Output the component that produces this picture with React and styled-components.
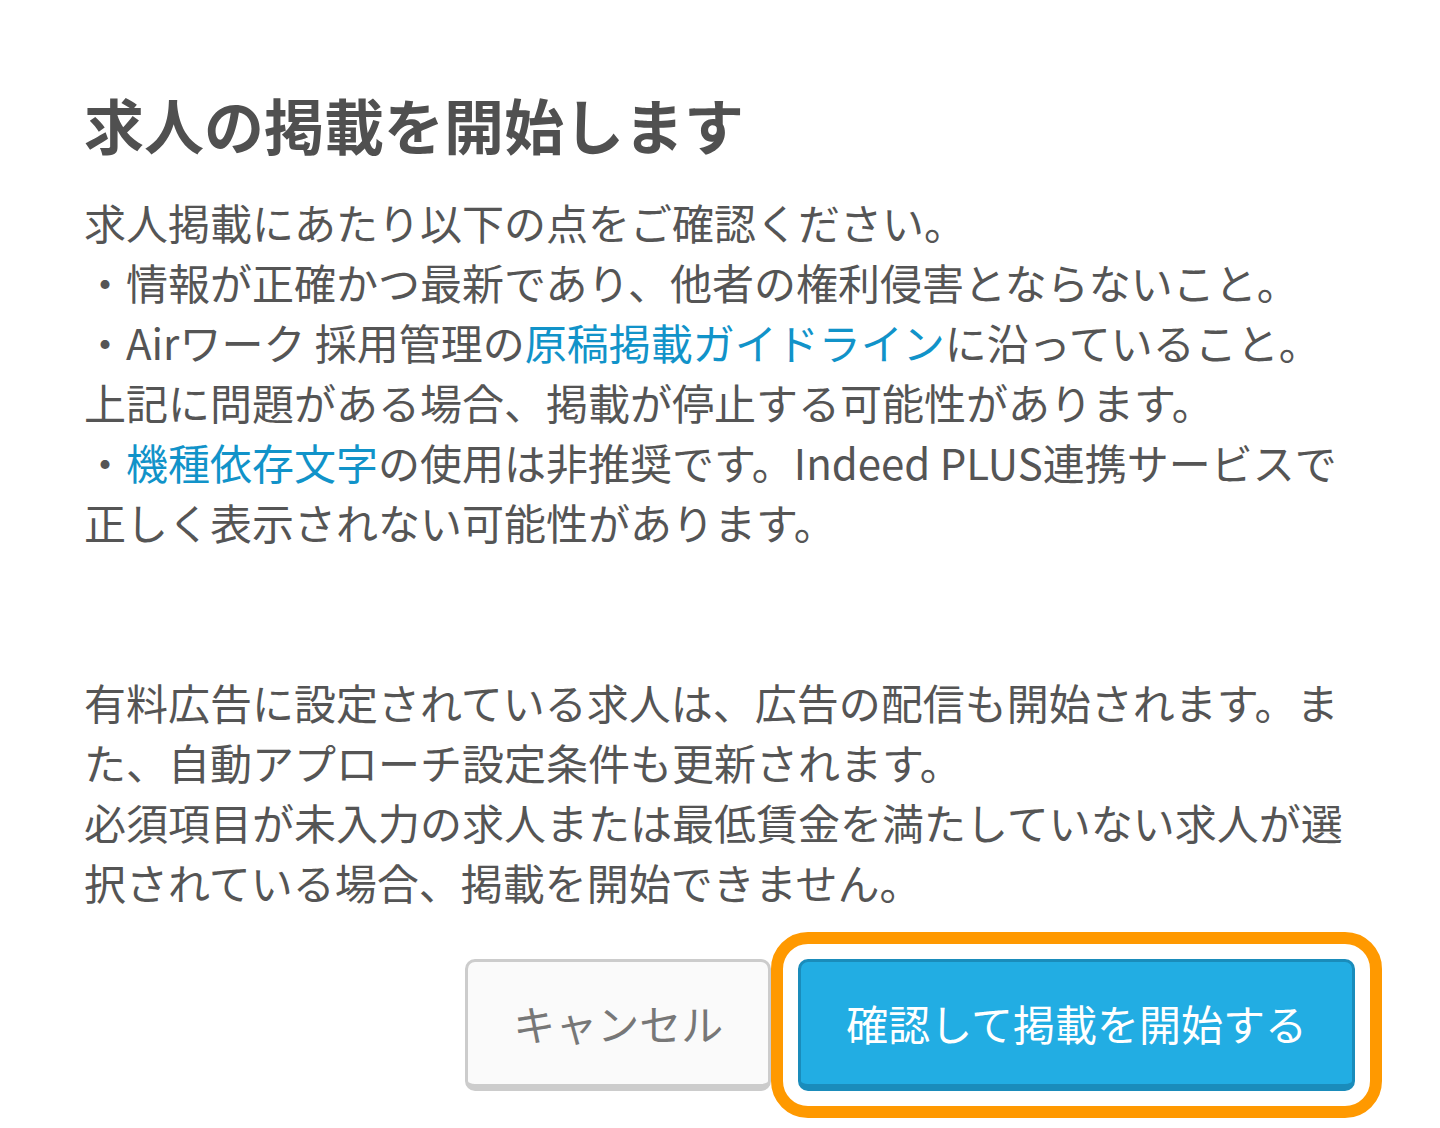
import React from "react";
import styled, { createGlobalStyle } from "styled-components";

const GlobalStyle = createGlobalStyle`
  body {
    margin: 0;
    background: #fff;
    font-family: "Noto Sans CJK JP", "Noto Sans", sans-serif;
  }
`;

const App = () => {
  return (
    <>
      <GlobalStyle />
      <Dialog>
        <Title>求人の掲載を開始します</Title>
        <Body>
          <Text>
            求人掲載にあたり以下の点をご確認ください。
            <br />
            ・情報が正確かつ最新であり、他者の権利侵害とならないこと。
            <br />
            ・Airワーク 採用管理の<Link href="#">原稿掲載ガイドライン</Link>
            に沿っていること。
            <br />
            上記に問題がある場合、掲載が停止する可能性があります。
            <br />
            ・<Link href="#">機種依存文字</Link>
            の使用は非推奨です。Indeed PLUS連携サービスで正しく表示されない可能性があります。
          </Text>
          <Text $spaced>
            有料広告に設定されている求人は、広告の配信も開始されます。また、自動アプローチ設定条件も更新されます。
            <br />
            必須項目が未入力の求人または最低賃金を満たしていない求人が選択されている場合、掲載を開始できません。
          </Text>
        </Body>
        <Actions>
          <Button>キャンセル</Button>
          <Button $primary $focused>
            確認して掲載を開始する
          </Button>
        </Actions>
      </Dialog>
    </>
  );
};

export default App;

const Dialog = styled.div`
  box-sizing: border-box;
  width: 1440px;
  min-height: 100vh;
  padding: 82px 85px 60px 84px;
`;

const Title = styled.h1`
  margin: 0;
  font-size: 60px;
  line-height: 84px;
  font-weight: 700;
  color: #505050;
`;

const Body = styled.div`
  margin-top: 26px;
`;

const Text = styled.p`
  margin: ${(p) => (p.$spaced ? "120px" : "0")} 0 0;
  font-size: 42px;
  line-height: 60px;
  color: #555;
`;

const Link = styled.a`
  color: #1193c9;
  text-decoration: none;
`;

const Actions = styled.div`
  display: flex;
  justify-content: flex-end;
  gap: 27px;
  margin-top: 47px;
`;

const Button = styled.button`
  box-sizing: border-box;
  height: 132px;
  padding: 0 45px;
  border: 3px solid ${(p) => (p.$primary ? "#1a8cbb" : "#cccccc")};
  border-bottom-width: 7px;
  border-radius: 10px;
  background: ${(p) => (p.$primary ? "#22ade3" : "#fafafa")};
  color: ${(p) => (p.$primary ? "#fff" : "#777")};
  font-family: "Noto Sans CJK JP", "Noto Sans", sans-serif;
  font-size: 42px;
  line-height: 60px;
  cursor: pointer;
  outline: ${(p) => (p.$focused ? "12px solid #ff9900" : "none")};
  outline-offset: 15px;
`;
